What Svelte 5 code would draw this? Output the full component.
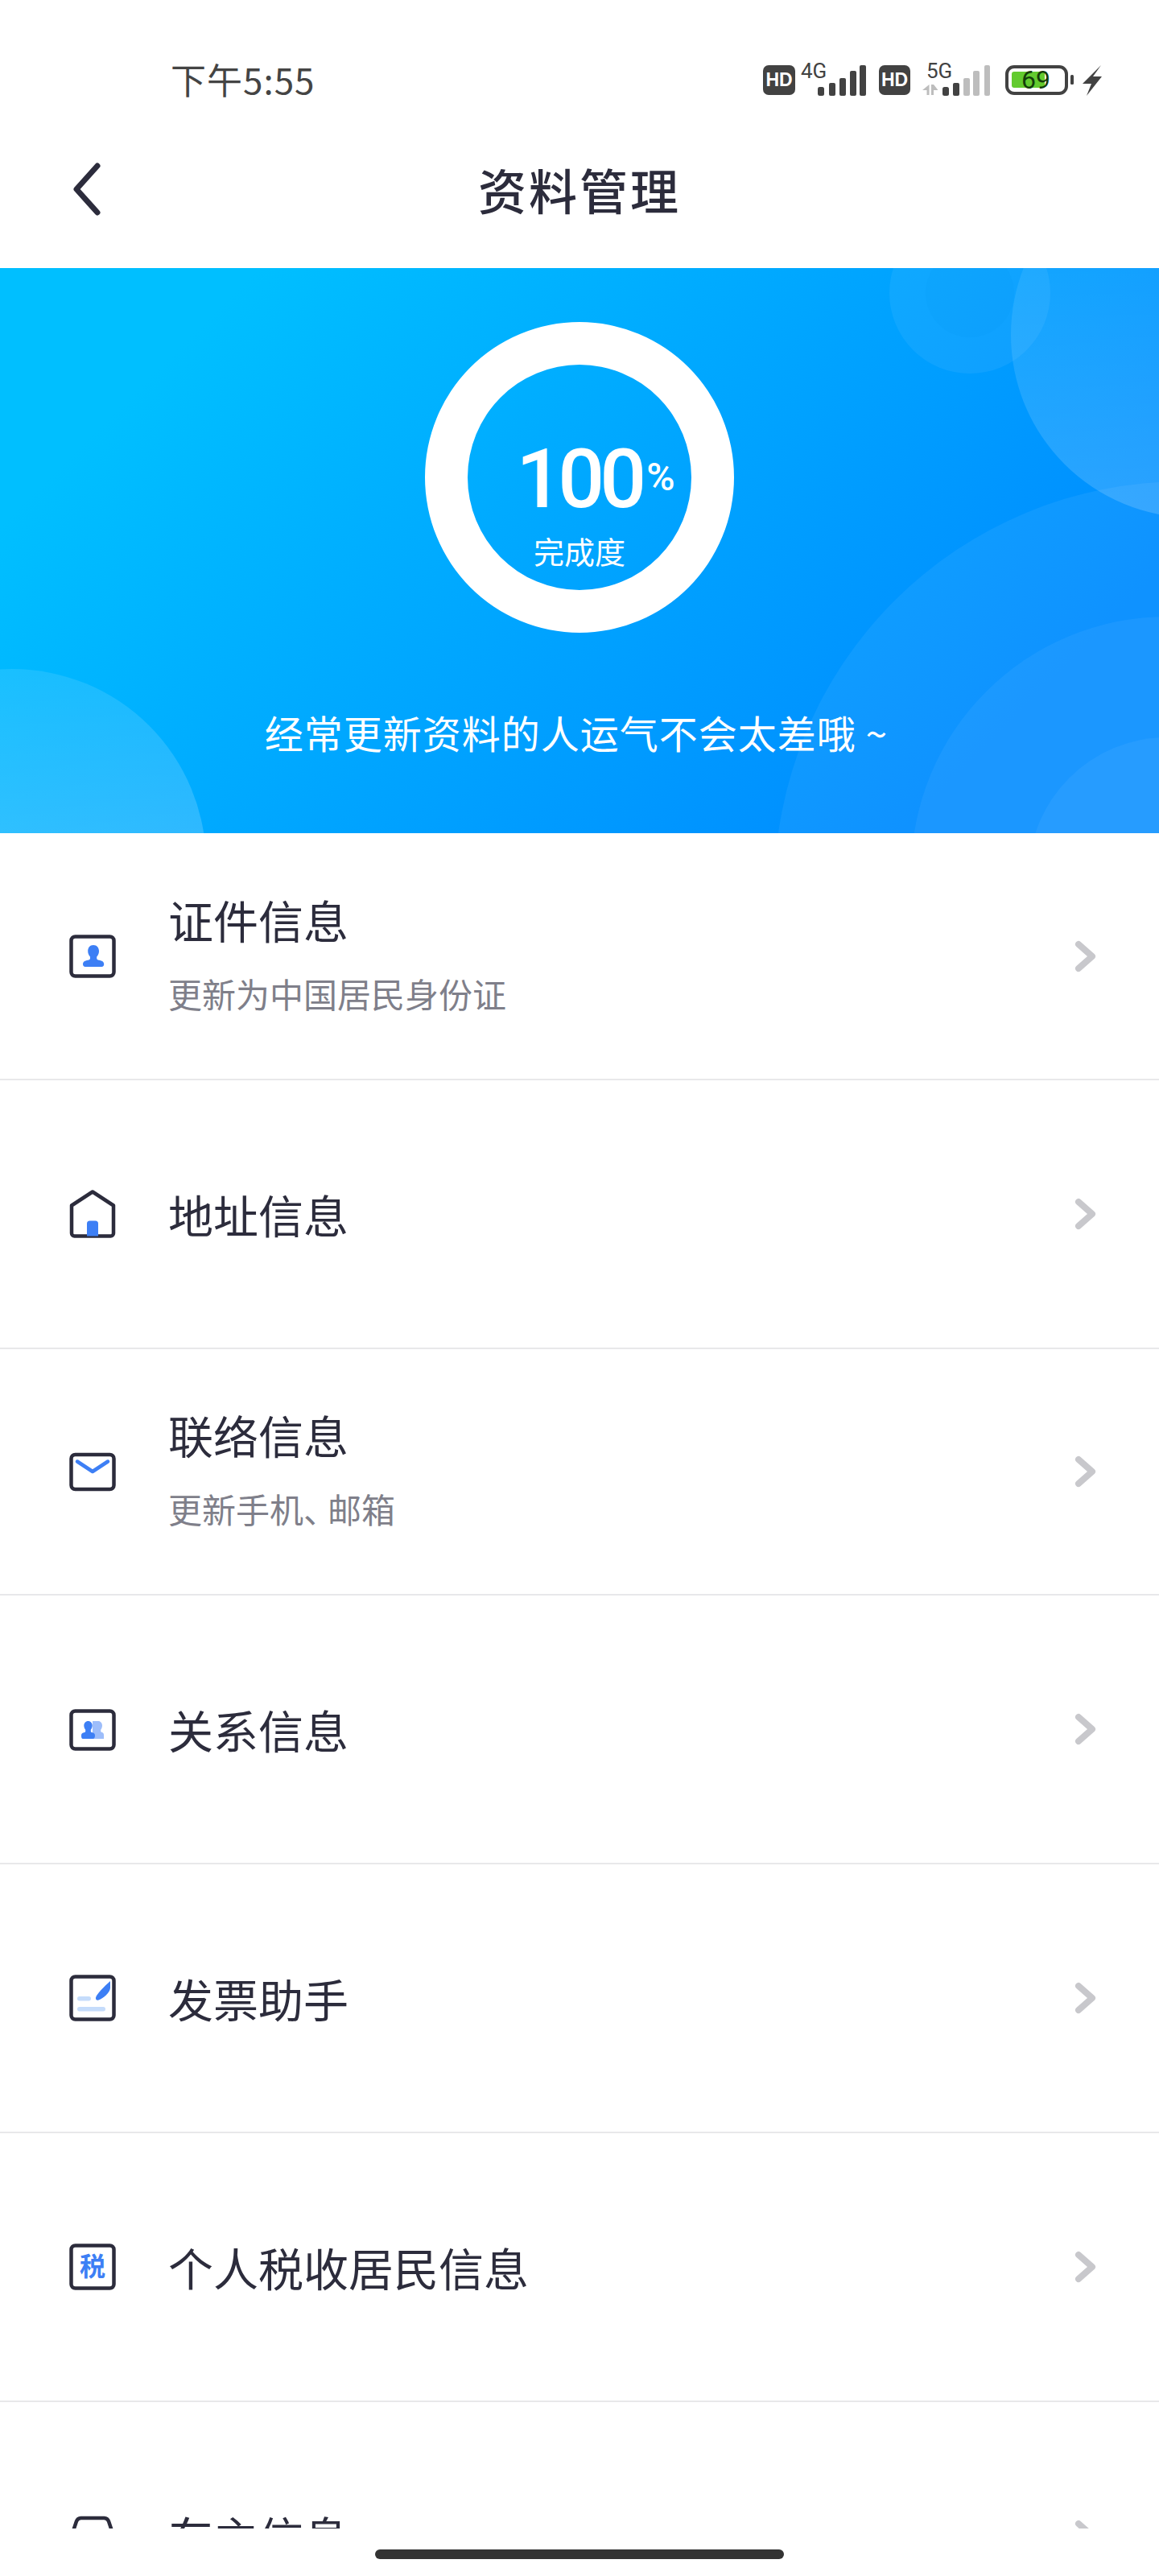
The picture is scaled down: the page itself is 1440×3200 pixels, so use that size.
<script>
	const rows = [
		{ key: "id", title: "证件信息", sub: "更新为中国居民身份证" },
		{ key: "home", title: "地址信息" },
		{ key: "mail", title: "联络信息", sub: "更新手机", subEnd: "邮箱" },
		{ key: "people", title: "关系信息" },
		{ key: "invoice", title: "发票助手" },
		{ key: "tax", title: "个人税收居民信息" },
		{ key: "car", title: "车主信息" }
	];
</script>

<main class="screen">
	<div class="status">
		<span class="time">下午5:55</span>
		<svg class="status-icons" width="440" height="60" viewBox="940 70 440 60">
			<rect x="948" y="81" width="40" height="37" rx="7" fill="#424242" />
			<text x="968" y="107" class="hd">HD</text>
			<text x="995" y="97" class="net">4G</text>
			<g fill="#424242">
				<rect x="1016" y="108" width="8" height="11" rx="2.500" />
				<rect x="1030" y="103" width="8" height="16" rx="2" />
				<rect x="1043" y="97" width="8" height="22" rx="2" />
				<rect x="1056" y="88" width="8" height="31" rx="2" />
				<rect x="1068" y="81" width="8" height="38" rx="2" />
			</g>
			<rect x="1092" y="81" width="39" height="37" rx="7" fill="#424242" />
			<text x="1111.500" y="107" class="hd">HD</text>
			<text x="1151" y="97" class="net">5G</text>
			<g fill="#bdbdbd">
				<path d="M1154.500 105v13h-3v-6h-5.500z" />
				<path d="M1157 118v-13h3l5.500 7h-5.500v6z" />
				<rect x="1197" y="97" width="8" height="22" rx="2" />
				<rect x="1209" y="88" width="8" height="31" rx="2" />
				<rect x="1223" y="81" width="7" height="38" rx="2" />
			</g>
			<g fill="#424242">
				<rect x="1171" y="108" width="8" height="11" rx="2.500" />
				<rect x="1184" y="103" width="8" height="16" rx="2" />
			</g>
			<rect x="1251" y="83" width="74" height="33" rx="9" fill="none" stroke="#424242" stroke-width="4" />
			<rect x="1257" y="89" width="41" height="20" rx="3" fill="#63cb2f" />
			<text x="1287" y="110" class="level">69</text>
			<rect x="1330" y="93" width="4" height="12" rx="1.500" fill="#424242" />
			<path d="M1368 81 1345 104h11l-6 15 19-24h-11z" fill="#424242" />
		</svg>
	</div>

	<nav class="nav">
		<svg class="back" width="40" height="70" viewBox="0 0 40 70">
			<polyline points="33,6 7,35 33,64" />
		</svg>
		<h1>资料管理</h1>
	</nav>

	<section class="hero">
		<svg class="hero-bg" width="1440" height="702" viewBox="0 333 1440 702">
			<defs>
				<linearGradient id="fadeUp" x1="0" y1="0" x2="0" y2="1">
					<stop offset="0" stop-color="#fff" stop-opacity="0.03" />
					<stop offset="1" stop-color="#fff" stop-opacity="0.17" />
				</linearGradient>
				<linearGradient id="fadeLeft" x1="0" y1="0" x2="0" y2="1">
					<stop offset="0" stop-color="#fff" stop-opacity="0.1" />
					<stop offset="0.5" stop-color="#fff" stop-opacity="0.2" />
				</linearGradient>
			</defs>
			<circle cx="15" cy="1072" r="241" fill="url(#fadeLeft)" />
			<circle cx="1483" cy="416" r="227" fill="url(#fadeUp)" />
			<circle cx="1205" cy="364" r="100" class="bubble-soft" />
			<circle cx="1205" cy="364" r="55" class="bubble-dark" />
			<circle cx="1470" cy="1106" r="508" class="bubble-soft" />
			<circle cx="1450" cy="1084" r="318" class="bubble" />
			<circle cx="1450" cy="1088" r="172" class="bubble" />
		</svg>
		<div class="ring">
			<div class="score"><span class="num">100</span><span class="pct">%</span></div>
			<div class="done">完成度</div>
		</div>
		<p class="tagline">经常更新资料的人运气不会太差哦 ~</p>
	</section>

	<div class="list">
		{#each rows as row}
			<div class="row" class:tall={row.sub}>
				<svg class="icon" width="64" height="64" viewBox="0 0 64 64">
					{#if row.key === "id"}
						<rect class="line" x="5.500" y="7.500" width="53" height="49" rx="5" />
						<path class="blue" d="M33 18c4.500 0 7 3.500 7 7.500 0 3-1.300 5.500-2.800 7v2c0 1.300 1 1.800 3 2.300 3.500.8 6 1.800 6 5 0 2-1 3.200-3 3.200H23c-2 0-3-1.200-3-3.200 0-3.200 2.500-4.200 6-5 2-.5 3-1 3-2.300v-2c-1.500-1.500-2.800-4-2.800-7C26.200 21.500 28.500 18 33 18z" />
					{:else if row.key === "home"}
						<path class="line" d="M6 21.500 32 4.500l26 17V56a3.500 3.500 0 0 1-3.500 3.500h-45A3.500 3.500 0 0 1 6 56z" />
						<path class="blue" d="M25 44a3.500 3.500 0 0 1 3.500-3.500h7A3.500 3.500 0 0 1 39 44v15.500H25z" />
					{:else if row.key === "mail"}
						<rect class="line" x="5.500" y="11" width="53" height="43" rx="5" />
						<polyline class="blue-line" points="13,19.500 32,32 51,19.500" />
					{:else if row.key === "people"}
						<rect class="line" x="5.500" y="9.500" width="53" height="47" rx="5" />
						<path class="pale" d="M39 22c3 0 5 2.500 5 5.500 0 2.200-.8 4-1.800 5.200v1.600c0 1 .6 1.500 1.600 1.800 1.700.5 2.200 1.500 2.200 3.400V44H32V22z" />
						<path class="blue" d="M26.500 22c3.200 0 5.200 2.500 5.200 5.500 0 2.200-.9 4-1.900 5.200v1.700c0 1 .7 1.500 2 1.900 2.200.6 3.200 1.500 3.200 3.400 0 2.500-.8 4.300-2.500 4.300H20c-1.700 0-2-1.800-2-4.300 0-1.900 1-2.800 3.200-3.400 1.300-.4 2-.9 2-1.900v-1.700c-1-1.200-1.900-3-1.900-5.200 0-3 2-5.500 5.200-5.500z" />
					{:else if row.key === "invoice"}
						<rect class="line" x="5.500" y="5.500" width="53" height="53" rx="5" />
						<path class="blue" d="M54 11v8.500c0 5-8.500 13-14.500 15-2.500.8-4-.5-3.500-3C37 27 46 18 54 11z" />
						<rect x="13" y="30" width="17" height="5.500" rx="2.700" fill="#c5dcfb" />
						<rect x="13" y="43" width="35" height="5.500" rx="2.700" fill="#c5dcfb" />
					{:else if row.key === "tax"}
						<rect class="line" x="5.500" y="5.500" width="53" height="53" rx="5" />
						<text x="32" y="43" class="tax-mark">税</text>
					{:else}
						<path class="line" d="M0 50 12 14a6 6 0 0 1 5.500-4h29a6 6 0 0 1 5.500 4l12 36" />
					{/if}
				</svg>
				<div class="text">
					<div class="title">{row.title}</div>
					{#if row.sub}
						<div class="sub">{row.sub}{#if row.subEnd}<span class="sep">、</span>{row.subEnd}{/if}</div>
					{/if}
				</div>
				<svg class="arrow" width="30" height="40" viewBox="0 0 30 40">
					<polyline points="6,5 23,20 6,35" />
				</svg>
			</div>
		{/each}
	</div>

	<div class="home-area"><span class="home-bar"></span></div>
</main>

<style>
	:global(body) {
		margin: 0;
		background: #fff;
	}

	* {
		box-sizing: border-box;
	}

	.screen {
		width: 1440px;
		height: 3200px;
		display: flex;
		flex-direction: column;
		overflow: hidden;
		background: #fff;
		color: #2c2c3c;
		font-family: "Noto Sans CJK SC", "Noto Sans", sans-serif;
	}

	.status {
		height: 140px;
		flex: none;
		padding: 58px 60px 0 212px;
		display: flex;
		justify-content: space-between;
		align-items: flex-start;
	}

	.time {
		font-size: 44px;
		line-height: 80px;
		color: #444;
		letter-spacing: 1px;
	}

	.status-icons {
		display: block;
		margin-top: 12px;
	}

	.hd {
		font-family: "Liberation Sans", sans-serif;
		font-weight: 700;
		font-size: 23px;
		fill: #fff;
		text-anchor: middle;
	}

	.net {
		font-family: Roboto, sans-serif;
		font-size: 26px;
		fill: #424242;
	}

	.level {
		font-family: Roboto, sans-serif;
		font-size: 32px;
		fill: #143d0a;
		text-anchor: middle;
	}

	.nav {
		height: 193px;
		flex: none;
		position: relative;
		display: flex;
		justify-content: center;
		align-items: center;
		padding-bottom: 4px;
	}

	.back {
		position: absolute;
		left: 88px;
		top: 60px;
	}

	.back polyline {
		fill: none;
		stroke: #2c2c3c;
		stroke-width: 7;
		stroke-linecap: round;
		stroke-linejoin: round;
	}

	h1 {
		margin: 0;
		font-size: 60px;
		font-weight: 500;
		letter-spacing: 3px;
		line-height: 1;
	}

	.hero {
		height: 702px;
		flex: none;
		position: relative;
		overflow: hidden;
		padding-top: 67px;
		display: flex;
		flex-direction: column;
		align-items: center;
		background: linear-gradient(135deg, #00bfff 15%, #00a5ff 50%, #008cff 85%);
		color: #fff;
	}

	.hero-bg {
		position: absolute;
		left: 0;
		top: 0;
	}

	.bubble {
		fill: #fff;
		opacity: 0.05;
	}

	.bubble-soft {
		fill: #fff;
		opacity: 0.06;
	}

	.bubble-dark {
		fill: #0090f0;
		opacity: 0.1;
	}

	.ring {
		position: relative;
		width: 384px;
		height: 386px;
		border: 53px solid #fff;
		border-radius: 50%;
		display: flex;
		flex-direction: column;
		align-items: center;
	}

	.score {
		display: flex;
		align-items: flex-start;
		margin: 92px 0 0 40px;
		height: 100px;
	}

	.num {
		font-family: Roboto, sans-serif;
		font-weight: 500;
		font-size: 102px;
		line-height: 100px;
		letter-spacing: -6px;
	}

	.pct {
		font-family: Roboto, sans-serif;
		font-weight: 500;
		font-size: 48px;
		line-height: 40px;
		margin: 28px 0 0 6px;
	}

	.done {
		font-size: 38px;
		line-height: 44px;
		margin-top: 17px;
	}

	.tagline {
		position: relative;
		margin: 93px 0 0;
		padding-right: 8px;
		font-size: 48px;
		line-height: 60px;
		letter-spacing: 1px;
	}

	.list {
		flex: 1;
		min-height: 0;
		overflow: hidden;
		padding-top: 1px;
	}

	.row {
		height: 334px;
		display: flex;
		align-items: center;
		padding: 0 76px 0 83px;
		border-bottom: 2px solid #e8e8ea;
	}

	.row.tall {
		height: 306px;
	}

	.icon {
		flex: none;
		display: block;
	}

	.line {
		fill: none;
		stroke: #2c2c3c;
		stroke-width: 4.5;
		stroke-linejoin: round;
	}

	.blue {
		fill: #3d7ff5;
	}

	.pale {
		fill: #9dbdfa;
	}

	.blue-line {
		fill: none;
		stroke: #3d7ff5;
		stroke-width: 4.5;
		stroke-linecap: round;
		stroke-linejoin: round;
	}

	.tax-mark {
		font-size: 32px;
		font-weight: 700;
		fill: #3d7ff5;
		text-anchor: middle;
	}

	.text {
		flex: 1;
		margin-left: 62px;
	}

	.tall .text {
		padding-bottom: 8px;
	}

	.title {
		font-size: 56px;
		line-height: 72px;
	}

	.sub {
		font-size: 42px;
		line-height: 56px;
		color: #7f7f8a;
		margin-top: 28px;
	}

	.sep {
		letter-spacing: -12px;
	}

	.arrow {
		flex: none;
	}

	.arrow polyline {
		fill: none;
		stroke: #c8c8cc;
		stroke-width: 8;
		stroke-linecap: round;
		stroke-linejoin: round;
	}

	.home-area {
		height: 59px;
		flex: none;
		background: #fff;
		padding-top: 26px;
		display: flex;
		justify-content: center;
	}

	.home-bar {
		width: 508px;
		height: 12px;
		border-radius: 6px;
		background: #333;
	}
</style>
